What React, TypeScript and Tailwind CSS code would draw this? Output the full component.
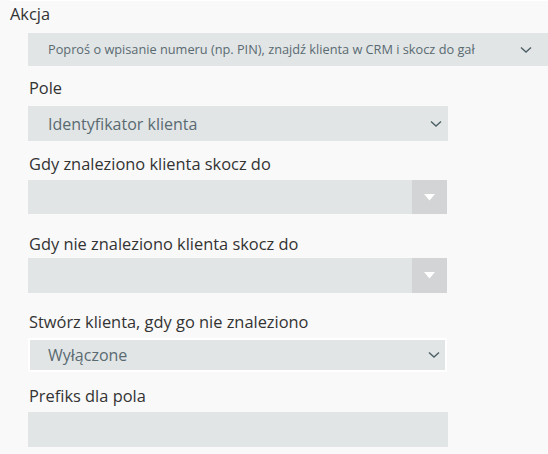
import React from "react";

const Chevron = () => (
  <svg width="12" height="8" viewBox="0 0 12 8" fill="none">
    <path d="M1 1.5L6 6L11 1.5" stroke="#4d5f66" strokeWidth="1.4" />
  </svg>
);

const Caret = () => (
  <svg width="11" height="7" viewBox="0 0 11 7">
    <path d="M0 0H11L5.5 6.5Z" fill="#ffffff" />
  </svg>
);

function Label({ children }: { children: React.ReactNode }) {
  return <div className="text-[16.4px] leading-[22px] text-[#333333]">{children}</div>;
}

export default function App() {
  return (
    <div
      className="w-[548px] h-[454px] bg-[#f9f9f9] overflow-hidden"
      style={{ fontFamily: '"Open Sans", "Noto Sans", sans-serif' }}
    >
      <div className="ml-[10px] border-t border-[#ffffff]" />
      <div className="pl-[10px] pt-[2px]">
        <Label>Akcja</Label>
      </div>
      <div className="pl-[28px] mt-[8px]">
        <div className="h-[33px] bg-[#e1e5e6] flex items-center justify-between pl-[20px] pr-[16px]">
          <span className="text-[12.75px] text-[#5a6a71] whitespace-nowrap overflow-hidden">
            Poproś o wpisanie numeru (np. PIN), znajdź klienta w CRM i skocz do gał
          </span>
          <Chevron />
        </div>
      </div>
      <div className="pl-[28px] w-[448px]">
        <div className="mt-[11px] pl-[1px]">
          <Label>Pole</Label>
        </div>
        <div className="mt-[7px] h-[35px] bg-[#e1e5e6] flex items-center justify-between pl-[20px] pr-[6px]">
          <span className="text-[16px] text-[#5a6a71]">Identyfikator klienta</span>
          <Chevron />
        </div>

        <div className="mt-[12px] pl-[1px]">
          <Label>Gdy znaleziono klienta skocz do</Label>
        </div>
        <div className="mt-[5px] h-[34px] w-[419px] bg-[#e1e5e6] flex justify-end">
          <div className="w-[35px] h-full bg-[#d2d4d5] flex items-center justify-center">
            <Caret />
          </div>
        </div>

        <div className="mt-[19px] pl-[1px]">
          <Label>Gdy nie znaleziono klienta skocz do</Label>
        </div>
        <div className="mt-[3px] h-[35px] w-[419px] bg-[#e1e5e6] flex justify-end">
          <div className="w-[35px] h-full bg-[#d2d4d5] flex items-center justify-center">
            <Caret />
          </div>
        </div>

        <div className="mt-[18px] pl-[1px]">
          <Label>Stwórz klienta, gdy go nie znaleziono</Label>
        </div>
        <div className="mt-[5px] h-[34px] w-[419px] border-2 border-[#ffffff] bg-[#e1e5e6] flex items-center justify-between pl-[18px] pr-[5px]">
          <span className="text-[16px] text-[#5a6a71]">Wyłączone</span>
          <Chevron />
        </div>

        <div className="mt-[13px] pl-[1px]">
          <Label>Prefiks dla pola</Label>
        </div>
        <div className="mt-[5px] h-[35px] w-[420px] bg-[#e1e5e6]" />
      </div>
    </div>
  );
}
